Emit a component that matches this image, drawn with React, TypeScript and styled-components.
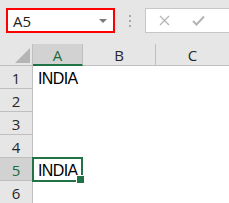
import React from "react"
import styled, { createGlobalStyle } from "styled-components"

const colors = {
  chrome: "#e6e6e6",
  header: "#e6e6e6",
  headerActive: "#d2d2d2",
  headerLine: "#bfbfbf",
  green: "#217346",
  greenText: "#1d6b40",
  text: "#000000",
  icon: "#b4b4b4",
}

const font = {
  ui: '"Open Sans", "Liberation Sans", sans-serif',
  cell: '"Liberation Sans", Arial, sans-serif',
}

const GlobalStyle = createGlobalStyle`
  html, body {
    margin: 0;
    padding: 0;
    background: #ffffff;
  }
  * {
    box-sizing: border-box;
  }
`

const Window = styled.div`
  width: 229px;
  height: 203px;
  overflow: hidden;
  background: ${colors.chrome};
`

// formula bar
const FormulaBar = styled.div`
  display: flex;
  align-items: flex-start;
  height: 44px;
  padding: 8px 0 0 6px;
`

const NameBox = styled.div`
  display: flex;
  align-items: center;
  justify-content: space-between;
  width: 109px;
  height: 25px;
  padding: 0 6px 0 5px;
  background: #ffffff;
  border: 2px solid #ff0000;
  font-family: ${font.ui};
  font-size: 15px;
  color: #222;
`

const Caret = styled.span`
  width: 0;
  height: 0;
  border-left: 4px solid transparent;
  border-right: 4px solid transparent;
  border-top: 4px solid #7a7a7a;
  margin-top: 1px;
`

const Dots = styled.div`
  display: flex;
  flex-direction: column;
  gap: 3px;
  margin: 7px 14px 0 14px;
  span {
    width: 2px;
    height: 2px;
    background: #a8a8a8;
  }
`

const FormulaBox = styled.div`
  flex: 1;
  display: flex;
  align-items: center;
  gap: 22px;
  height: 25px;
  padding-left: 13px;
  background: #ffffff;
  border: 1px solid #c6c6c6;
  border-right: none;
`

// grid
const Sheet = styled.div`
  display: grid;
  grid-template-columns: 33px 50px 73px 1fr;
  grid-template-rows: 22px repeat(6, 23px);
  background: #ffffff;
`

const Corner = styled.div`
  position: relative;
  background: ${colors.header};
  border-right: 1px solid ${colors.headerLine};
  border-bottom: 1px solid ${colors.headerLine};
  &::after {
    content: "";
    position: absolute;
    right: 2px;
    bottom: 2px;
    width: 0;
    height: 0;
    border-left: 15px solid transparent;
    border-bottom: 15px solid #b5b5b5;
  }
`

const ColHeader = styled.div<{ active?: boolean; last?: boolean }>`
  display: flex;
  align-items: center;
  justify-content: center;
  padding-top: 1px;
  font-family: ${font.ui};
  font-size: 15px;
  color: ${(p) => (p.active ? colors.greenText : "#262626")};
  background: ${(p) => (p.active ? colors.headerActive : colors.header)};
  border-right: ${(p) => (p.last ? "none" : `1px solid ${colors.headerLine}`)};
  border-bottom: ${(p) =>
    p.active ? `2px solid ${colors.green}` : `1px solid ${colors.headerLine}`};
`

const RowHeader = styled.div<{ active?: boolean }>`
  display: flex;
  align-items: center;
  justify-content: center;
  padding-top: 1px;
  font-family: ${font.ui};
  font-size: 15px;
  color: ${(p) => (p.active ? colors.greenText : "#262626")};
  background: ${(p) => (p.active ? colors.headerActive : colors.header)};
  border-right: 1px solid
    ${(p) => (p.active ? colors.green : colors.headerLine)};
  border-bottom: 1px solid ${colors.headerLine};
`

const Cell = styled.div`
  position: relative;
  display: flex;
  align-items: flex-end;
  padding: 0 0 1px 5px;
  font-family: ${font.cell};
  font-size: 16px;
  line-height: 18px;
  letter-spacing: -0.6px;
  color: ${colors.text};
  white-space: nowrap;
`

const Selection = styled.div`
  position: absolute;
  left: -1px;
  top: -1px;
  right: 0;
  bottom: -1px;
  border: 2px solid ${colors.green};
  pointer-events: none;
  &::after {
    content: "";
    position: absolute;
    right: -4px;
    bottom: -4px;
    width: 7px;
    height: 7px;
    background: ${colors.green};
    border: 1px solid #ffffff;
  }
`

const CrossIcon = () => (
  <svg width="11" height="11" viewBox="0 0 11 11">
    <path d="M1 1 L10 10 M10 1 L1 10" stroke={colors.icon} strokeWidth="1.3" fill="none" />
  </svg>
)

const CheckIcon = () => (
  <svg width="13" height="11" viewBox="0 0 13 11">
    <path d="M1 6 L4.5 9.5 L12 1.5" stroke={colors.icon} strokeWidth="2" fill="none" />
  </svg>
)

const rows: { n: number; a: string }[] = [
  { n: 1, a: "INDIA" },
  { n: 2, a: "" },
  { n: 3, a: "" },
  { n: 4, a: "" },
  { n: 5, a: "INDIA" },
  { n: 6, a: "" },
]

export default function App() {
  const activeRow = 5
  return (
    <Window>
      <GlobalStyle />
      <FormulaBar>
        <NameBox>
          <span>A5</span>
          <Caret />
        </NameBox>
        <Dots>
          <span />
          <span />
          <span />
        </Dots>
        <FormulaBox>
          <CrossIcon />
          <CheckIcon />
        </FormulaBox>
      </FormulaBar>
      <Sheet>
        <Corner />
        <ColHeader active>A</ColHeader>
        <ColHeader>B</ColHeader>
        <ColHeader last>C</ColHeader>
        {rows.map((r) => (
          <React.Fragment key={r.n}>
            <RowHeader active={r.n === activeRow}>{r.n}</RowHeader>
            <Cell>
              {r.a}
              {r.n === activeRow && <Selection />}
            </Cell>
            <Cell />
            <Cell />
          </React.Fragment>
        ))}
      </Sheet>
    </Window>
  )
}
